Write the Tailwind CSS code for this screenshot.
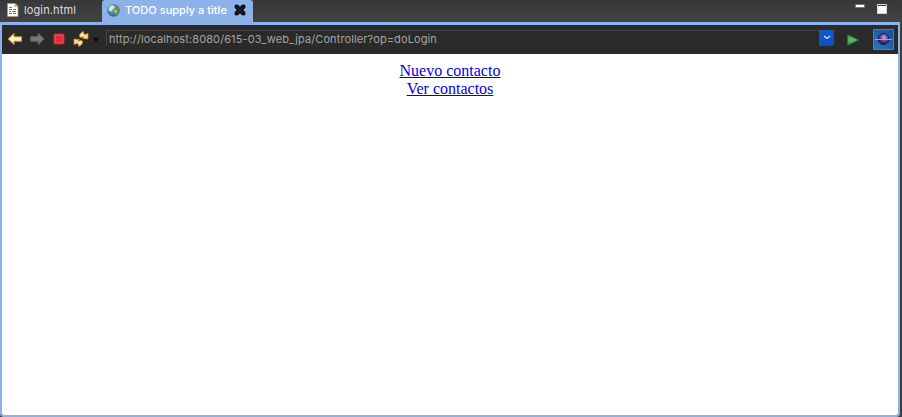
<!DOCTYPE html>
<html lang="es">
<head>
<meta charset="utf-8">
<title>TODO supply a title</title>
<script src="https://cdn.jsdelivr.net/npm/@tailwindcss/browser@4"></script>
</head>
<body class="h-[417px] w-[902px] overflow-hidden bg-[#3d3d3f] font-['Inter',sans-serif] text-[11px]">
<div class="flex h-[417px] flex-col">
  <header class="flex h-[22px] shrink-0 bg-linear-to-b from-[#38383a] to-[#424244]">
    <div class="flex h-[22px] w-[102px] items-start pl-[7px] text-[#dedede]">
      <svg class="mt-[3px] h-[14px] w-[12px]" viewBox="0 0 12 14">
        <path d="M.5.5h7.500l3 3v10H.5z" fill="#fffdf5" stroke="#b79a60" stroke-width=".8"/>
        <path d="M8 .5v3h3" fill="#e8d3a0" stroke="#b79a60" stroke-width=".8"/>
        <path d="M2 4.500h3M2 8.500h2M6 10.500h3" stroke="#e05252"/>
        <path d="M2 6.500h3M5 8.500h4M2 10.500h3" stroke="#4a7cc8"/>
        <path d="M6 6.500h3" stroke="#3c9868"/>
      </svg>
      <span class="ml-[5px] mt-[2px] whitespace-nowrap leading-4 tracking-[0.12px]">login.html</span>
    </div>
    <div class="flex h-[22px] w-[151px] items-start rounded-t-[3px] bg-[#8db2e9] pl-[5px] text-white">
      <svg class="mt-[4px] h-[13px] w-[13px]" viewBox="0 0 14 14">
        <defs><radialGradient id="globe" cx=".4" cy=".3" r=".75"><stop offset="0" stop-color="#8fc4e4"/><stop offset=".5" stop-color="#4b8dbd"/><stop offset="1" stop-color="#245d8e"/></radialGradient></defs>
        <circle cx="7" cy="7" r="6.500" fill="url(#globe)" stroke="#4e7790" stroke-width=".6"/>
        <path d="M2.500 3L5 1.500l2 .5 1.500 2L6 6 5 8 3 7 1.500 7.500z" fill="#d9e9d2"/>
        <path d="M8 2l3 .5 2 3v3l-2 3-2 1-1-3-2-2 1-2 2-1z" fill="#688f5d"/>
        <path d="M8 6l3 1-1 3-2-1z" fill="#c2c486"/>
      </svg>
      <span class="ml-[5px] mt-[2px] w-[104px] whitespace-nowrap leading-4 tracking-[0.02px] font-medium">TODO supply a title</span>
      <svg class="ml-[5px] mt-[4px] h-3 w-3" viewBox="0 0 12 12"><path d="M1 1h3l2 2.300L8 1h3v3L8.700 6 11 8v3H8L6 8.700 4 11H1V8l2.300-2L1 4z" fill="#111" stroke="#050505" stroke-width=".6"/><path d="M3 3l6 6M9 3L3 9" stroke="#29313e" stroke-width=".6"/></svg>
    </div>
    <div class="ml-auto mr-[15px] flex items-start gap-[12px] pt-1">
      <span class="h-[4px] w-[10px] border border-[#777] bg-white"></span>
      <svg class="h-[10px] w-[10px]" viewBox="0 0 10 10"><path d="M0 0h10v10H0z" fill="#aaa"/><path d="M.5.5h9v9h-9z" fill="#fff"/><path d="M1 1.500h8" stroke="#444"/></svg>
    </div>
  </header>
  <main class="mr-[2px] flex flex-1 flex-col overflow-hidden rounded-b-[4px] border-x-2 border-b-2 border-t-3 border-[#8db2e9]">
    <nav class="flex h-[29px] shrink-0 items-center bg-[#2a2a2a] pl-[5px] pr-[4px]">
      <svg class="-mt-px h-[14px] w-4" viewBox="0 0 16 14"><path d="M1.200 7l5.800-5.500v3.300h7.500v4.400H7v3.300z" fill="#fff5bd" stroke="#d39433" stroke-linejoin="round"/></svg>
      <svg class="-mt-px ml-[6px] h-[14px] w-4" viewBox="0 0 16 14"><path d="M15 7L9.200 1.500v3.300H1.700v4.400h7.500v3.300z" fill="#777" stroke="#666" stroke-linejoin="round"/></svg>
      <svg class="-mt-px ml-2 h-3 w-3" viewBox="0 0 12 12"><rect x="1" y="1" width="10" height="10" rx=".8" fill="#e22c3b" stroke="#c4222e"/><path d="M2 2h8v8H2z" fill="none" stroke="#ee6a74" stroke-width=".7"/></svg>
      <svg class="-mt-px ml-[8px] h-4 w-4" viewBox="0 0 16 16"><g fill="#fbe2a0" stroke="#c98224" stroke-width=".8" stroke-linejoin="round"><path d="M6.500 6.500C6 4 7.500 2 10.500 1l.2 2.200L12.500 4 15 2.800V8.500L9.500 8l1.700-1.700C9.500 6.800 8 7.200 6.500 6.500z" transform="translate(0 -.5)"/><path d="M9.500 9.500c.5 2.500-1 4.500-4 5.500l-.2-2.200-1.800-.8L1 13.200V7.500L6.500 8 4.800 9.700c1.700-.5 3.200-.9 4.700-.2z" transform="translate(0 .5)"/></g></svg>
      <svg class="ml-[4px] h-[4px] w-[6px]" viewBox="0 0 6 4"><path d="M0 0h6L3 4z" fill="#050505"/></svg>
      <div class="mb-[4px] ml-[7px] flex h-4 w-[728px] items-start border-l border-t border-[#444]">
        <span class="ml-[2px] whitespace-nowrap leading-4 tracking-[0.105px] text-[#a5a5a5]">http://localhost:8080/615-03_web_jpa/Controller?op=doLogin</span>
        <span class="-mt-px ml-auto flex h-4 w-[15px] shrink-0 items-center justify-center rounded-r-[3px] bg-linear-to-b from-[#1558cc] to-[#0c4fc7]"><svg class="h-[5px] w-2" viewBox="0 0 8 5"><path d="M1 1l3 2.500L7 1" fill="none" stroke="#d5e4ff" stroke-width="1.300"/></svg></span>
      </div>
      <svg class="ml-[13px] h-3 w-3" viewBox="0 0 12 12"><defs><linearGradient id="run" x2="0" y2="1"><stop stop-color="#3c9c52"/><stop offset=".5" stop-color="#65b56c"/><stop offset="1" stop-color="#219345"/></linearGradient></defs><path d="M.7.8L11.500 6 .7 11.200z" fill="url(#run)" stroke="#268144" stroke-width=".8"/></svg>
      <svg class="ml-auto h-[21px] w-[21px]" viewBox="0 0 21 21"><defs><linearGradient id="sky" x1="1" x2="0" y2="1"><stop stop-color="#164a9a"/><stop offset="1" stop-color="#2b78bd"/></linearGradient><radialGradient id="planet" cx=".55" cy=".35" r=".6"><stop offset="0" stop-color="#d3b3e0"/><stop offset=".5" stop-color="#68509a"/><stop offset="1" stop-color="#21164a"/></radialGradient></defs><path d="M.5.5h20v20H.5z" fill="url(#sky)" stroke="#3489d5"/><circle cx="10.500" cy="10" r="5.400" fill="url(#planet)" stroke="#241951"/><path d="M2 10.500h17" stroke="#a79ae0"/></svg>
    </nav>
    <section class="flex flex-1 flex-col items-center bg-white pt-[8px] font-['Liberation_Serif',serif] text-[16px] leading-[18px] text-[#0000ee]">
      <a class="underline" href="#">Nuevo contacto</a>
      <a class="underline" href="#">Ver contactos</a>
    </section>
  </main>
</div>
</body>
</html>
